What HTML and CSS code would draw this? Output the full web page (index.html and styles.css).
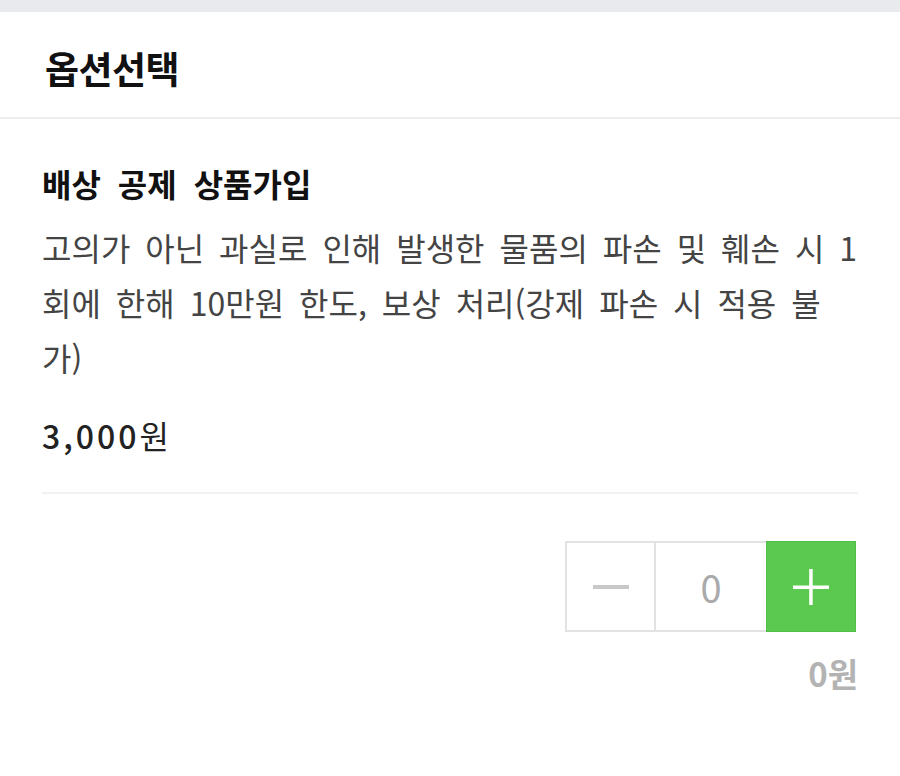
FILE: index.html
```html
<!DOCTYPE html>
<html lang="ko">
<head>
<meta charset="utf-8">
<link rel="stylesheet" href="styles.css">
</head>
<body>
<div class="topband"></div>
<header class="sheet-header">
  <h1 class="sheet-title">옵션선택</h1>
</header>
<section class="option">
  <h2 class="option-title">배상 공제 상품가입</h2>
  <p class="option-desc">고의가 아닌 과실로 인해 발생한 물품의 파손 및 훼손 시 1회에 한해 10만원 한도, 보상 처리(강제 파손 시 적용 불가)</p>
  <div class="option-price"><span class="num">3,000</span>원</div>
  <div class="divider"></div>
  <div class="stepper-row">
    <div class="stepper">
      <button class="step minus" type="button">
        <svg width="36" height="4" viewBox="0 0 36 4"><rect x="0" y="0" width="36" height="4" fill="#c8c8c8"/></svg>
      </button>
      <div class="step-value">0</div>
      <button class="step plus" type="button">
        <svg width="36" height="36" viewBox="0 0 36 36"><rect x="0" y="16.5" width="36" height="3.5" fill="#fff"/><rect x="16.2" y="0" width="3.5" height="36" fill="#fff"/></svg>
      </button>
    </div>
  </div>
  <div class="total">0원</div>
</section>
</body>
</html>
```
FILE: styles.css
```css
html, body {
  margin: 0;
  padding: 0;
  background: #fff;
}
body {
  width: 900px;
  font-family: "Noto Sans CJK KR", "Noto Sans", sans-serif;
  color: #111;
}
.topband {
  height: 12px;
  background: #e9eaee;
}
.sheet-header {
  height: 107px;
  border-bottom: 2px solid #eeeeee;
  display: flex;
  align-items: center;
  padding: 0 45px;
  box-sizing: border-box;
}
.sheet-title {
  margin: 0;
  font-size: 37px;
  font-weight: 700;
  line-height: 1;
  letter-spacing: -0.5px;
  color: #111;
  transform: translateY(4px);
}
.option {
  padding: 0 42px;
  display: flex;
  flex-direction: column;
}
.option-title {
  margin: 42px 0 0;
  font-size: 32px;
  font-weight: 700;
  line-height: 44px;
  color: #111;
  word-spacing: 8px;
}
.option-desc {
  margin: 15px 0 0;
  font-size: 32px;
  font-weight: 400;
  line-height: 55px;
  color: #444;
  word-spacing: 6px;
}
.option-price {
  margin-top: 28px;
  font-size: 32px;
  line-height: 44px;
  color: #222;
  font-weight: 400;
}
.option-price .num {
  font-weight: 500;
  letter-spacing: 3px;
}
.divider {
  margin-top: 35px;
  height: 2px;
  background: #f1f1f1;
}
.stepper-row {
  display: flex;
  justify-content: flex-end;
  margin-top: 47px;
  margin-right: 2px;
}
.stepper {
  display: flex;
  height: 91px;
}
.step {
  margin: 0;
  padding: 0;
  font: inherit;
  display: flex;
  align-items: center;
  justify-content: center;
  box-sizing: border-box;
  cursor: pointer;
}
.minus {
  width: 91px;
  background: #fff;
  border: 2px solid #e2e2e2;
}
.step-value {
  width: 110px;
  box-sizing: border-box;
  border-top: 2px solid #e2e2e2;
  border-bottom: 2px solid #e2e2e2;
  display: flex;
  align-items: center;
  justify-content: center;
  font-size: 38px;
  color: #aaaaaa;
}
.plus {
  width: 90px;
  background: #5bc94f;
  border: 1px solid #52bd47;
}
.total {
  align-self: flex-end;
  margin-top: 19px;
  font-size: 33px;
  font-weight: 700;
  line-height: 44px;
  color: #b3b3b3;
}
```
